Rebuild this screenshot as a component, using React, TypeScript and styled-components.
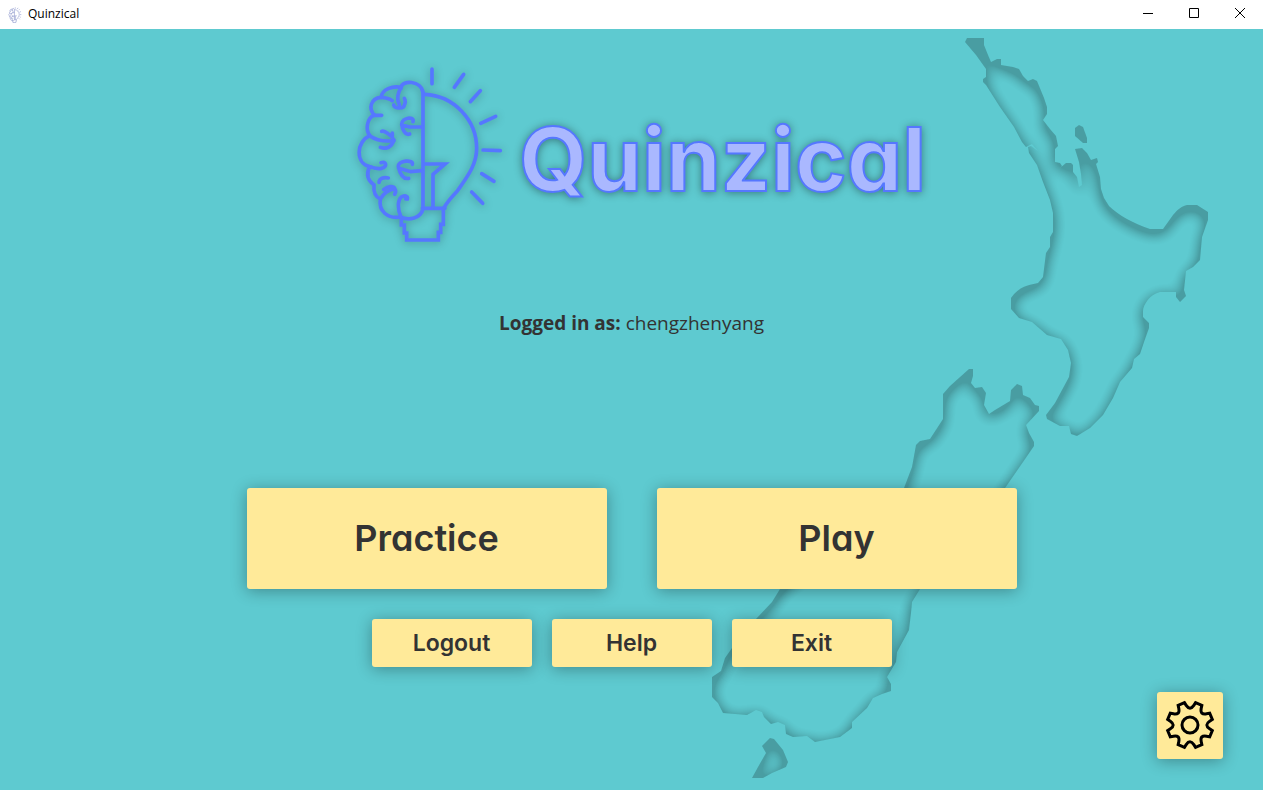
import React from "react";
import styled, { createGlobalStyle } from "styled-components";

const colors = {
  sea: "#5ecad0",
  button: "#ffea99",
  ink: "#333333",
  outline: "#5577ff",
  lavender: "#aab8ff",
};

const GlobalStyle = createGlobalStyle`
  *, *::before, *::after { box-sizing: border-box; }
  body { margin: 0; background: ${colors.sea}; }
`;

const Window = styled.div`
  display: flex;
  flex-direction: column;
  min-height: 100vh;
  background: ${colors.sea};
  color: ${colors.ink};
  font-family: "Open Sans", "Noto Sans", sans-serif;
`;

const TitleBar = styled.header`
  display: flex;
  align-items: center;
  height: 29px;
  padding-left: 8px;
  background: #ffffff;
  color: #000000;
`;

const WindowTitle = styled.span`
  flex: 1;
  margin-left: 6px;
  font-family: "Open Sans", sans-serif;
  font-size: 12px;
  line-height: 16px;
  padding-bottom: 2px;
`;

const WindowControls = styled.div`
  display: flex;
  height: 29px;
`;

const ControlButton = styled.button`
  display: grid;
  place-items: center;
  width: 46px;
  padding: 0 0 4px;
  border: 0;
  background: transparent;
`;

const Stage = styled.main`
  position: relative;
  display: flex;
  flex: 1;
  flex-direction: column;
  align-items: center;
  overflow: hidden;
`;

const MapBackdrop = styled.svg`
  position: absolute;
  top: 0;
  right: 43px;
  width: 520px;
  height: 761px;
`;

const Brand = styled.div`
  position: relative;
  display: flex;
  align-items: center;
  justify-content: center;
  margin-top: 26px;
  padding-left: 2px;
`;

const BrandMark = styled.svg`
  width: 180px;
  height: 200px;
  filter: drop-shadow(0 1px 4px rgba(0, 0, 0, 0.3));
`;

const BrandName = styled.h1`
  margin: 0;
  padding-top: 8px;
  font-family: Inter, sans-serif;
  font-size: 88px;
  font-weight: 700;
  line-height: 120px;
  font-feature-settings: "cv11";
  color: ${colors.lavender};
  -webkit-text-stroke: 2px ${colors.outline};
  filter: drop-shadow(0 1px 4px rgba(0, 0, 0, 0.4));
`;

const LoginStatus = styled.p`
  position: relative;
  margin: 54px 0 0;
  font-size: 19px;
  line-height: 28px;
`;

const Row = styled.div<{ $gap: number; $top: number }>`
  position: relative;
  display: flex;
  justify-content: center;
  gap: ${(p) => p.$gap}px;
  width: 100%;
  margin-top: ${(p) => p.$top}px;
`;

const MenuButton = styled.button<{ $large?: boolean }>`
  flex: 0 1 ${(p) => (p.$large ? 360 : 160)}px;
  height: ${(p) => (p.$large ? 101 : 48)}px;
  padding: 0 0 ${(p) => (p.$large ? 2 : 0)}px;
  border: 0;
  border-radius: 3px;
  background: ${colors.button};
  box-shadow: 0 2px 16px rgba(0, 0, 0, 0.32);
  color: ${colors.ink};
  font-family: Inter, sans-serif;
  font-size: ${(p) => (p.$large ? 36 : 23)}px;
  font-weight: 600;
  font-feature-settings: "cv11";
  cursor: pointer;
`;

const Footer = styled.footer`
  position: relative;
  display: flex;
  justify-content: flex-end;
  width: 100%;
  padding: 25px 40px 31px;
`;

const SettingsButton = styled.button`
  display: grid;
  place-items: center;
  width: 66px;
  height: 67px;
  padding: 0 0 2px;
  border: 0;
  border-radius: 3px;
  background: ${colors.button};
  box-shadow: 0 2px 16px rgba(0, 0, 0, 0.32);
  cursor: pointer;
`;

function BulbLines() {
  return (
    <>
      <path d="M187 490V510H196V534H203V555H298V532H305V508H313V460" />
      <path d="M252 112V462M250 460H318" />
      <path d="M257 118C345 122 413 195 413 280C413 330 385 365 355 408C338 426 325 440 315 458" />
      <path d="M257 327H318L282 358V456" />
      <path d="M252 112C246 76 190 74 186 97C160 92 130 102 126 127C94 130 88 162 106 180C82 190 80 225 92 242C52 260 48 325 92 335C80 360 88 378 105 390C103 410 108 425 124 432C118 468 145 492 184 486C210 498 245 490 252 462" />
      <path d="M126 127C140 128 152 131 160 137M187 97C173 118 174 136 181 150M164 150C168 163 196 161 196 150C200 142 199 135 196 130" />
      <path d="M106 181H128M92 242C108 254 135 260 165 257M128 229C134 226 156 238 165 255C158 276 144 284 124 277M160 234V244" />
      <path d="M248 216H212L188 210M222 200C227 182 188 188 188 208C190 222 198 242 212 237" />
      <path d="M248 347L215 350L180 340M220 328C226 314 176 314 178 336C182 352 190 374 209 370" />
      <path d="M92 335C104 340 118 342 128 340C146 334 142 317 126 323M120 382C122 370 133 366 148 369" />
      <path d="M124 432C134 415 148 405 165 402M134 404C148 392 163 392 167 400C171 407 171 412 167 418" />
      <path d="M186 486C176 465 175 438 186 427C196 420 208 422 205 432H200" />
      <path d="M279 42V86M374 58L346 97M424 107L394 140M470 184L425 205M432 285L484 287M428 356L465 379M398 411L431 445" />
    </>
  );
}

const northIsland =
  "M965 42L967 38H984V45L988 55L991 62L997 59H1001V65L1013 67L1019 69L1023 76L1028 81L1033 79L1037 81L1044 98L1047 107V114L1043 120L1050 129L1056 136L1058 146L1055 149V162L1060 163L1062 166L1060 168L1066 163H1071L1073 165V172L1077 177L1079 187L1082 185L1081 174L1079 162L1075 149L1082 148L1087 153L1091 160L1097 158L1098 162L1096 164L1100 177L1101 189L1104 198L1109 206C1118 215 1133 223 1150 229H1163L1173 215C1178 209 1182 206 1187 205H1197L1208 212V220L1202 237L1200 260L1193 267L1186 271L1184 290L1186 296L1180 302L1176 297V292H1160C1150 294 1143 305 1143 311V317L1149 323V328L1144 342L1140 354L1134 359L1132 368L1120 382L1113 398L1103 415L1090 428L1077 436L1071 434L1069 426L1060 426L1047 419L1046 415L1055 403L1062 390L1069 377L1071 363L1068 350L1061 339L1047 335L1032 322L1019 318L1011 309V298C1019 286 1029 285 1038 283L1043 277L1046 253L1050 247V237L1053 232V213L1050 200L1043 182L1037 165L1029 153L1028 147L1031 146L1038 151L1032 144L1026 147L1022 142L1014 127L1000 107L986 85L983 82V79L986 77V69L976 55Z";

const islet = "M1079 125L1083 127L1087 138V143H1083L1075 136V128Z";

const southIsland =
  "M969 369H973V376L971 383L975 388L982 387L986 393L984 405L989 414L995 410L1010 401L1011 390L1017 384L1022 386L1023 395L1030 398L1035 405L1039 406V411L1026 425L1029 433L1034 442V446L1023 462L1005 488L980 530L950 565L920 589L912 602L911 613L909 630L897 652L896 662L887 677L891 684V691L882 694L873 698L867 708L852 722V728L840 737L815 742L807 736L793 737L786 734L785 725L778 722L771 724L764 717L762 712L756 710L747 715L723 713L718 703L712 697V677L721 671L725 658L732 648L744 631L756 619L772 602L780 589L830 550L885 520L904 488L912 467L916 445L920 441L930 439L943 419V394L950 386Z";

const stewartIsland =
  "M770 738L774 739L783 750L788 762L786 767L772 773L763 778H752L758 767L766 753L762 746Z";

function NewZealand() {
  return (
    <MapBackdrop viewBox="700 29 520 761" aria-hidden="true">
      <defs>
        <filter
          id="engraved"
          filterUnits="userSpaceOnUse"
          x="690"
          y="10"
          width="540"
          height="790"
          colorInterpolationFilters="sRGB"
        >
          <feFlood floodColor="#000" result="dark" />
          <feComposite in="dark" in2="SourceAlpha" operator="out" />
          <feGaussianBlur stdDeviation="8" />
          <feOffset dx="0" dy="4" />
          <feComponentTransfer>
            <feFuncA type="linear" slope="2.6" intercept="-0.1" />
          </feComponentTransfer>
          <feComponentTransfer>
            <feFuncA type="linear" slope="0.22" />
          </feComponentTransfer>
          <feComposite in2="SourceAlpha" operator="in" result="inner" />
          <feMerge>
            <feMergeNode in="SourceGraphic" />
            <feMergeNode in="inner" />
          </feMerge>
        </filter>
      </defs>
      <g fill={colors.sea} filter="url(#engraved)">
        <path d={northIsland} />
        <path d={islet} />
        <path d={southIsland} />
        <path d={stewartIsland} />
      </g>
    </MapBackdrop>
  );
}

function polar(radius: number, degrees: number) {
  const a = (degrees * Math.PI) / 180;
  return `${(radius * Math.sin(a)).toFixed(2)} ${(-radius * Math.cos(a)).toFixed(2)}`;
}

const gearOutline =
  Array.from({ length: 8 }, (_, i) => {
    const a = i * 45;
    return `${i ? "L" : "M"}${polar(23, a - 14)}L${polar(20, a - 11)}Q${polar(
      14,
      a
    )} ${polar(20, a + 11)}L${polar(23, a + 14)}`;
  }).join("") + "Z";

function GearIcon() {
  return (
    <svg width="50" height="50" viewBox="-25 -25 50 50" fill="none" stroke="#000" strokeWidth="3" aria-hidden="true">
      <path d={gearOutline} />
      <circle r="8" />
    </svg>
  );
}

export default function App() {
  return (
    <Window>
      <GlobalStyle />
      <TitleBar>
        <svg
          width="14"
          height="16"
          viewBox="40 30 460 540"
          fill="none"
          stroke="#8d98cc"
          strokeWidth="20"
          aria-hidden="true"
        >
          <BulbLines />
        </svg>
        <WindowTitle>Quinzical</WindowTitle>
        <WindowControls>
          <ControlButton type="button" aria-label="Minimize">
            <svg width="10" height="10" stroke="#000">
              <path d="M0 5.5H10" />
            </svg>
          </ControlButton>
          <ControlButton type="button" aria-label="Maximize">
            <svg width="10" height="10" stroke="#000" fill="none">
              <path d="M.5 .5H9.5V9.5H.5Z" />
            </svg>
          </ControlButton>
          <ControlButton type="button" aria-label="Close">
            <svg width="10" height="10" stroke="#000">
              <path d="M0 0L10 10M10 0L0 10" />
            </svg>
          </ControlButton>
        </WindowControls>
      </TitleBar>
      <Stage>
        <NewZealand />
        <Brand>
          <BrandMark
            viewBox="0 0 540 600"
            fill="none"
            stroke={colors.outline}
            strokeWidth="11"
            strokeLinecap="round"
            aria-hidden="true"
          >
            <BulbLines />
          </BrandMark>
          <BrandName>Quinzical</BrandName>
        </Brand>
        <LoginStatus>
          <strong>Logged in as:</strong> chengzhenyang
        </LoginStatus>
        <Row $gap={50} $top={151}>
          <MenuButton type="button" $large>
            Practice
          </MenuButton>
          <MenuButton type="button" $large>
            Play
          </MenuButton>
        </Row>
        <Row $gap={20} $top={30}>
          <MenuButton type="button">Logout</MenuButton>
          <MenuButton type="button">Help</MenuButton>
          <MenuButton type="button">Exit</MenuButton>
        </Row>
        <Footer>
          <SettingsButton type="button" aria-label="Settings">
            <GearIcon />
          </SettingsButton>
        </Footer>
      </Stage>
    </Window>
  );
}
